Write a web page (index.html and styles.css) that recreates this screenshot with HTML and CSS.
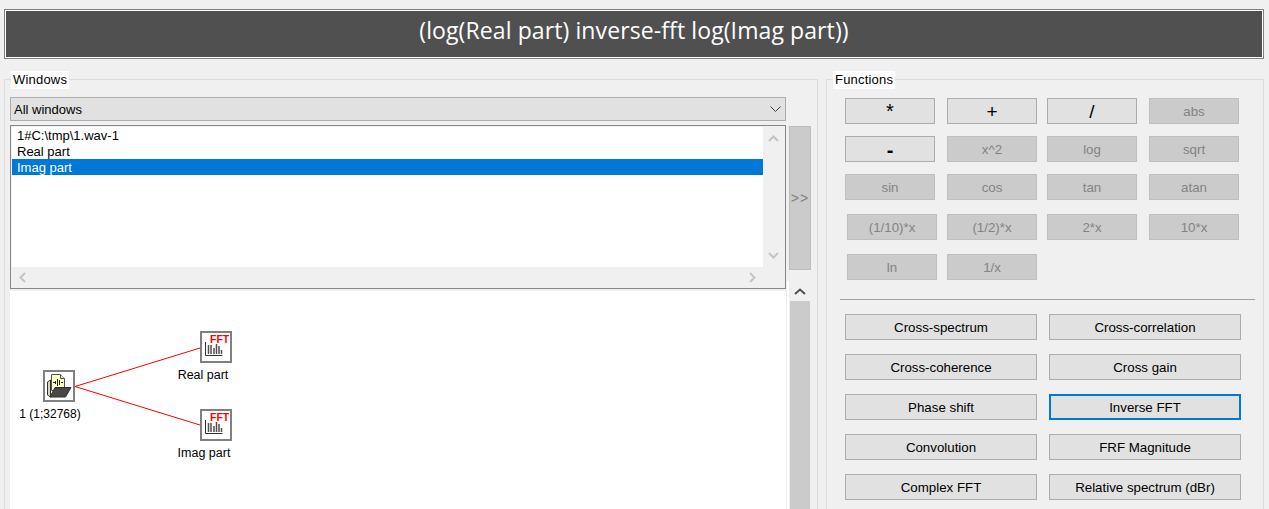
FILE: index.html
```html
<!DOCTYPE html>
<html lang="en">
<head>
<meta charset="utf-8">
<title>Combine windows</title>
<link rel="stylesheet" href="styles.css">
</head>
<body>
<header class="title"><div class="title-inner">(log(Real part) inverse-fft log(Imag part))</div></header>
<main class="panels">
  <section class="group windows">
    <h2 class="legend">Windows</h2>
    <div class="windows-grid">
      <div class="select"><span>All windows</span>
        <svg class="chev" width="11" height="6" viewBox="0 0 11 6"><path d="M.5.5l5 5 5-5" fill="none" stroke="#404040"/></svg>
      </div>
      <div class="spacer"></div>
      <div class="listbox">
        <ul class="list">
          <li>1#C:\tmp\1.wav-1</li>
          <li>Real part</li>
          <li class="selected">Imag part</li>
        </ul>
        <div class="vscroll">
          <svg width="11" height="7" viewBox="0 0 11 7"><path d="M1 6l4.500-4.500L10 6" fill="none" stroke="#c4c4c4" stroke-width="2"/></svg>
          <svg width="11" height="7" viewBox="0 0 11 7"><path d="M1 1l4.500 4.500L10 1" fill="none" stroke="#c4c4c4" stroke-width="2"/></svg>
        </div>
        <div class="hscroll">
          <svg width="7" height="11" viewBox="0 0 7 11"><path d="M6 1L1.500 5.500 6 10" fill="none" stroke="#c4c4c4" stroke-width="2"/></svg>
          <svg width="7" height="11" viewBox="0 0 7 11"><path d="M1 1l4.500 4.500L1 10" fill="none" stroke="#c4c4c4" stroke-width="2"/></svg>
        </div>
      </div>
      <div class="move">&gt;&gt;</div>
      <div class="canvas">
        <svg class="wires" width="260" height="170" viewBox="0 0 260 170"><path d="M65 95.500L190 57M65 95.500L190 134" fill="none" stroke="#f00"/></svg>
        <figure class="node node-file">
          <div class="icon">
            <svg width="28" height="28" viewBox="0 0 28 28">
              <path d="M5.500 8L2.500 10V23L5.500 25Z" fill="#d8d8b8" stroke="#303030"/>
              <path d="M6.500 2.500h9l4 4v12h-13Z" fill="#ffffc8" stroke="#505050"/>
              <path d="M15.500 2.500v4h4" fill="#e0e0e0" stroke="#505050"/>
              <path d="M8 10.500h2M10.500 9v3M12.500 7v7M14.500 8v5M16 10.500h2" stroke="#202020" fill="none"/>
              <path d="M5 25L10 15.500H26L20.500 25Z" fill="#484848" stroke="#303030"/>
            </svg>
          </div>
          <figcaption>1 (1;32768)</figcaption>
        </figure>
        <figure class="node node-real">
          <div class="icon">
            <svg width="28" height="28" viewBox="0 0 28 28">
              <path d="M3.500 9v13.500h17" fill="none" stroke="#303030"/>
              <path class="bars" d="M6.500 12v9M9 12v9M12 15v6M14.500 11v10M17 13v8M19.500 17v4"/>
              <text x="8" y="10" class="fft">FFT</text>
            </svg>
          </div>
          <figcaption>Real part</figcaption>
        </figure>
        <figure class="node node-imag">
          <div class="icon">
            <svg width="28" height="28" viewBox="0 0 28 28">
              <path d="M3.500 9v13.500h17" fill="none" stroke="#303030"/>
              <path class="bars" d="M6.500 12v9M9 12v9M12 15v6M14.500 11v10M17 13v8M19.500 17v4"/>
              <text x="8" y="10" class="fft">FFT</text>
            </svg>
          </div>
          <figcaption>Imag part</figcaption>
        </figure>
      </div>
      <div class="canvas-scroll">
        <svg class="up" width="12" height="7" viewBox="0 0 12 7"><path d="M1 6l5-4.500L11 6" fill="none" stroke="#505050" stroke-width="2"/></svg>
        <div class="thumb"></div>
      </div>
    </div>
  </section>
  <section class="group functions">
    <h2 class="legend">Functions</h2>
    <div class="calc">
      <button class="btn op star">*</button><button class="btn op thin">+</button><button class="btn op thin">/</button><button class="btn off">abs</button>
      <button class="btn op minus">-</button><button class="btn off">x^2</button><button class="btn off">log</button><button class="btn off">sqrt</button>
      <button class="btn off">sin</button><button class="btn off">cos</button><button class="btn off">tan</button><button class="btn off">atan</button>
      <button class="btn off shift">(1/10)*x</button><button class="btn off">(1/2)*x</button><button class="btn off">2*x</button><button class="btn off">10*x</button>
      <button class="btn off shift">ln</button><button class="btn off">1/x</button>
    </div>
    <hr class="rule">
    <div class="ops">
      <button class="btn">Cross-spectrum</button><button class="btn">Cross-correlation</button>
      <button class="btn">Cross-coherence</button><button class="btn">Cross gain</button>
      <button class="btn">Phase shift</button><button class="btn focus">Inverse FFT</button>
      <button class="btn">Convolution</button><button class="btn">FRF Magnitude</button>
      <button class="btn">Complex FFT</button><button class="btn">Relative spectrum (dBr)</button>
    </div>
  </section>
</main>
</body>
</html>
```
FILE: styles.css
```css
* { box-sizing: border-box; }
html, body { margin: 0; height: 509px; overflow: hidden; }
body {
  background: #f0f0f0;
  color: #000;
  font: 13px/16px "Liberation Sans", Arial, sans-serif;
  padding: 9px 4px 0 4px;
}
.title {
  height: 50px;
  margin-right: 1px;
  border: 1px solid #808080;
}
.title-inner {
  height: 48px;
  border: 1px solid #fff;
  background: #505050;
  color: #fff;
  font: 23px/38px "Open Sans", sans-serif;
  letter-spacing: .1px;
  text-align: center;
}
.panels {
  display: flex;
  gap: 8px;
  margin-top: 20px;
}
.group {
  position: relative;
  height: 440px;
  border: 1px solid #dcdcdc;
  border-bottom: 0;
}
.windows { width: 814px; padding: 17px 0 0 5px; }
.functions { width: 438px; padding: 18px 0 0 18px; }
.legend {
  position: absolute;
  top: -9px;
  left: 6px;
  margin: 0;
  padding: 1px 2px;
  background: #fff;
  font: inherit;
  letter-spacing: .2px;
  height: 18px;
}
.windows-grid {
  display: grid;
  grid-template-columns: 776px 25px;
  grid-template-rows: 28px 166px 218px;
  column-gap: 3px;
}
.select {
  height: 24px;
  border: 1px solid #adadad;
  background: #e1e1e1;
  padding: 1px 4px 0 3px;
  display: flex;
  align-items: center;
  justify-content: space-between;
}
.chev { margin-top: -1px; }
.spacer { grid-column: 2; }
.listbox {
  height: 164px;
  border: 1px solid #828790;
  padding: 1px;
  display: grid;
  grid-template-columns: 751px 1fr;
  grid-template-rows: 140px 20px;
  background: #f0f0f0;
}
.list { margin: 0; padding: 0; list-style: none; background: #fff; }
.list li { height: 16px; padding: 1px 0 0 5px; line-height: 16px; }
.list .selected { background: #0078d7; color: #fff; }
.vscroll {
  display: flex;
  flex-direction: column;
  justify-content: space-between;
  align-items: center;
  padding: 8px 0 8px;
}
.hscroll {
  grid-column: 1;
  display: flex;
  justify-content: space-between;
  align-items: center;
  padding: 0 7px 0 7px;
}
.move {
  width: 22px;
  height: 144px;
  margin-top: 1px;
  background: #cbcbcb;
  border: 1px solid #bdbdbd;
  color: #808080;
  font-size: 14px;
  letter-spacing: 1px;
  display: flex;
  align-items: center;
  justify-content: center;
}
.canvas {
  position: relative;
  background: #fff;
  height: 218px;
  width: 776px;
}
.wires { position: absolute; left: 0; top: 0; }
.node { position: absolute; margin: 0; width: 80px; text-align: center; }
.node-file { left: 0; top: 79px; }
.node-real { left: 153px; top: 40px; }
.node-imag { left: 154px; top: 118px; }
.icon {
  position: relative;
  width: 32px;
  height: 32px;
  margin: 0 auto;
  border: 2px solid #808080;
  background: #fff;
}
.icon svg { display: block; }
.node-file .icon { left: 9px; }
.node-real .icon { left: 13px; }
.node-imag .icon { left: 12px; }
.node figcaption { font-size: 12.5px; line-height: 16px; margin-top: 4px; }
.node-file figcaption { font-size: 12px; }
.bars { fill: none; stroke: #505050; stroke-width: 1.500; }
.fft {
  font: bold 10.500px "Liberation Sans", sans-serif;
  fill: #f00;
}
.canvas-scroll {
  position: relative;
  width: 22px;
  height: 218px;
  background: #f0f0f0;
  display: flex;
  flex-direction: column;
  align-items: center;
}
.canvas-scroll::before {
  content: "";
  position: absolute;
  left: -2px;
  top: -10px;
  bottom: 0;
  width: 2px;
  background: #fff;
}
.up { margin-top: -3px; }
.thumb { width: 20px; flex: 1; background: #cbcbcb; margin-top: 6px; }
.calc {
  display: grid;
  grid-template-columns: 102px 100px 102px 90px;
  grid-template-rows: 38px 38px 40px 40px 26px;
}
.btn {
  width: 90px;
  height: 26px;
  padding: 2px 0 0;
  border: 1px solid #adadad;
  background: #e1e1e1;
  color: #000;
  font: inherit;
  font-size: 13.300px;
  border-radius: 0;
}
.off { background: #cbcbcb; border-color: #bfbfbf; color: #838383; }
.op { font-size: 20px; }
.thin { font-weight: 400; font-size: 19px; }
.star { padding-bottom: 3px; }
.minus { font-weight: bold; }
.shift { margin-left: 2px; }
.rule {
  margin: 19px 8px 14px -5px;
  border: 0;
  border-top: 1px solid #a0a0a0;
  height: 0;
}
.ops {
  display: grid;
  grid-template-columns: 192px 192px;
  column-gap: 12px;
  row-gap: 14px;
}
.ops .btn { width: 192px; }
.focus { border: 2px solid #0078d7; }
```
